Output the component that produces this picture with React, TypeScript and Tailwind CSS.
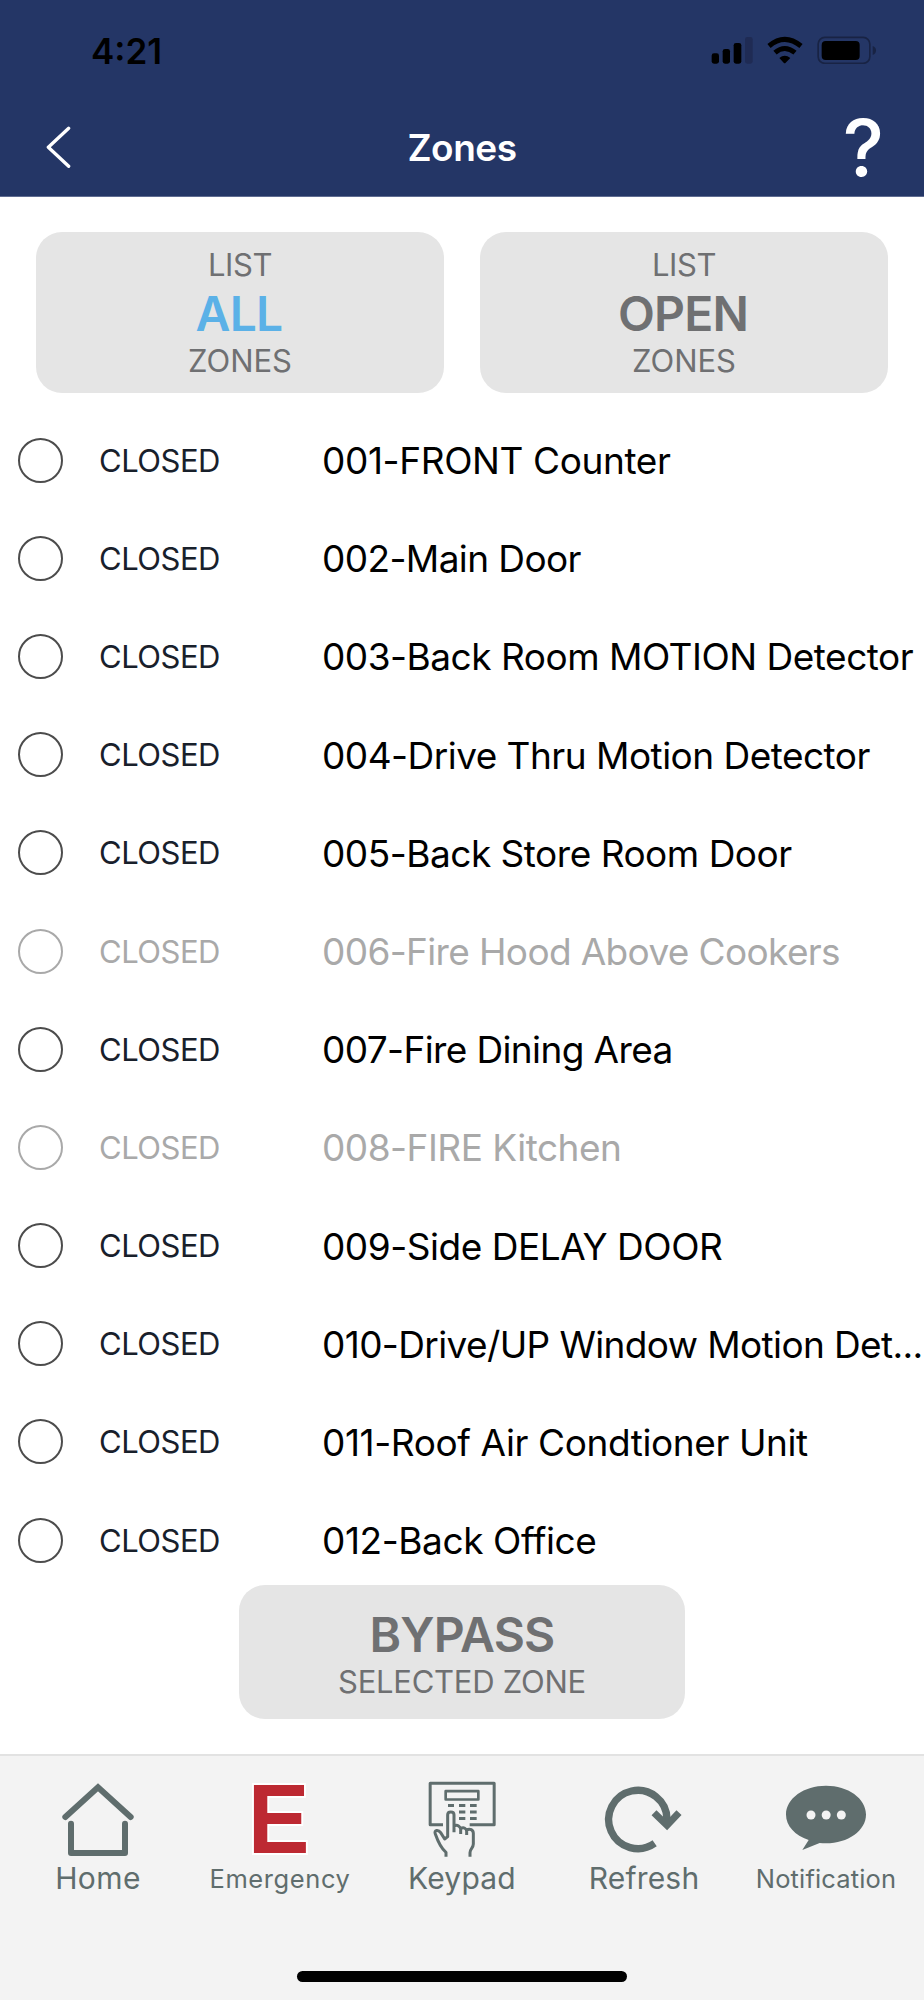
import React from 'react';

type Zone = { name: string; tracking: string; disabled?: boolean };

const zones: Zone[] = [
  { name: '001-FRONT Counter', tracking: 'tracking-[-0.38px]' },
  { name: '002-Main Door', tracking: 'tracking-[-0.6px]' },
  { name: '003-Back Room MOTION Detector', tracking: 'tracking-[-0.49px]' },
  { name: '004-Drive Thru Motion Detector', tracking: 'tracking-[-0.52px]' },
  { name: '005-Back Store Room Door', tracking: 'tracking-[-0.49px]' },
  { name: '006-Fire Hood Above Cookers', tracking: 'tracking-[-0.64px]', disabled: true },
  { name: '007-Fire Dining Area', tracking: 'tracking-[-0.62px]' },
  { name: '008-FIRE Kitchen', tracking: 'tracking-[-0.5px]', disabled: true },
  { name: '009-Side DELAY DOOR', tracking: 'tracking-[-0.47px]' },
  { name: '010-Drive/UP Window Motion Det...', tracking: 'tracking-[-0.62px]' },
  { name: '011-Roof Air Condtioner Unit', tracking: 'tracking-[-0.4px]' },
  { name: '012-Back Office', tracking: 'tracking-[-0.42px]' },
];

function StatusIcons() {
  return (
    <svg className="h-7 w-[168px]" viewBox="748 108 504 84" fill="none">
      <rect x="750" y="160" width="22" height="31" rx="7" fill="#000" />
      <rect x="783" y="147" width="22" height="44" rx="7" fill="#000" />
      <rect x="816" y="129" width="23" height="62" rx="7" fill="#000" />
      <rect x="850" y="111" width="23" height="80" rx="7" fill="#1f2b54" />
      <path d="M922 138Q969 98 1018 138" stroke="#000" strokeWidth="15" />
      <path d="M940 158Q969 133 1000 158" stroke="#000" strokeWidth="15" />
      <path d="M953 174Q969 160 986 174L972 188Q969 191 966 188Z" fill="#000" />
      <rect x="1069.500" y="112" width="155" height="78" rx="20" stroke="#182344" strokeWidth="5" />
      <rect x="1080" y="123" width="114" height="57" rx="12" fill="#000" />
      <path d="M1233 138Q1243 142 1243 151.500Q1243 161 1233 165Z" fill="#182344" />
    </svg>
  );
}

function HomeIcon() {
  return (
    <svg className="h-[106px] w-[182px]" viewBox="21 48 546 318" fill="none" stroke="#5f6d6d" strokeWidth="18" strokeLinecap="round" strokeLinejoin="round">
      <path d="M196 231L294 142L392 231" strokeLinejoin="miter" strokeMiterlimit="1.8" />
      <path d="M213 251V339H375V251" />
    </svg>
  );
}

function EmergencyIcon() {
  return (
    <svg className="h-[106px] w-[182px] overflow-visible" viewBox="567 48 546 318">
      <text
        transform="translate(743.500 340) scale(0.935 1)"
        className="font-['Liberation_Sans',sans-serif] text-[297px] font-bold"
        fill="#bd2932"
        stroke="#fff"
        strokeWidth="12"
        paintOrder="stroke"
      >
        E
      </text>
    </svg>
  );
}

function KeypadIcon() {
  return (
    <svg className="h-[106px] w-[182px]" viewBox="3 48 546 318" fill="none" stroke="#5f6d6d" strokeWidth="9">
      <path d="M219 254.500H180.500V129.500H372.500V254.500H299" strokeLinejoin="round" />
      <rect x="227" y="153.500" width="98" height="25" strokeWidth="8" strokeLinejoin="round" />
      <path d="M234 196.500H252M267 196.500H286M300 196.500H320M267 216H286M300 216H320M267 235.500H286M300 235.500H320" />
      <path
        d="M228 350V337C212 324 205 308 196 282C191 270 205 268 212 278L224 297L233 290V224C233 213 252 213 252 224V277M252 258C262 252 272 260 272 268V282M272 266C281 260 290 266 290 274V285M290 270C300 264 310 270 310 280V312C310 324 300 326 300 338V350"
        strokeLinejoin="round"
      />
    </svg>
  );
}

function RefreshIcon() {
  return (
    <svg className="h-[106px] w-[182px]" viewBox="549 48 546 318" fill="none" stroke="#5f6d6d">
      <path d="M854 310A87.500 87.500 0 1 1 891 237V249" strokeWidth="22" />
      <path d="M852 218L891 256L927 218" strokeWidth="21" />
    </svg>
  );
}

function NotificationIcon() {
  return (
    <svg className="h-[106px] w-[182px]" viewBox="165 48 546 318">
      <path
        d="M438 137C504 137 558 175 558 223.500C558 272 504 310 438 310Q428 310 419 309L367 330L386 300C345 286 318 258 318 223.500C318 175 372 137 438 137Z"
        fill="#5f6d6d"
      />
      <circle cx="393" cy="225" r="13.500" fill="#f3f3f3" />
      <circle cx="438.500" cy="225" r="13.500" fill="#f3f3f3" />
      <circle cx="484" cy="225" r="13.500" fill="#f3f3f3" />
    </svg>
  );
}

const tabs = [
  { label: 'Home', Icon: HomeIcon, text: 'text-[30px] tracking-[0.4px]' },
  { label: 'Emergency', Icon: EmergencyIcon, text: 'pt-px text-[25.5px] tracking-[0.6px]' },
  { label: 'Keypad', Icon: KeypadIcon, text: 'text-[30px] tracking-[0.2px]' },
  { label: 'Refresh', Icon: RefreshIcon, text: 'text-[30px] tracking-[0.2px]' },
  { label: 'Notification', Icon: NotificationIcon, text: 'pt-px text-[25.5px] tracking-[0.15px]' },
];

function ListButton({ word, color }: { word: string; color: string }) {
  return (
    <button className="flex h-[161px] w-[408px] flex-col items-center rounded-[26px] bg-[#e5e5e5] pt-[15px] text-[#6f7072]">
      <span className="text-[31px] leading-[36px] tracking-[-0.4px]">LIST</span>
      <span className={`pt-px pr-[2px] text-[48px] leading-[59px] font-semibold tracking-[-0.8px] ${color}`}>{word}</span>
      <span className="text-[31px] leading-[36px] tracking-[-0.05px]">ZONES</span>
    </button>
  );
}

export default function App() {
  return (
    <div className="flex h-[2000px] w-[924px] flex-col overflow-hidden bg-white font-['Inter',sans-serif]">
      <header className="flex h-[197px] shrink-0 flex-col border-b border-[#5f6c91] bg-[#243666]">
        <div className="flex h-[100px] items-center justify-between pr-[45px] pl-[91px]">
          <span className="pt-[2px] text-[35px] leading-[40px] font-semibold">4:21</span>
          <StatusIcons />
        </div>
        <div className="grid h-[94px] grid-cols-[200px_1fr_200px] items-center text-white">
          <svg className="ml-[46px] h-[42px] w-[25px]" viewBox="138 378 75 126" fill="none" stroke="#fff" strokeWidth="10" strokeLinecap="round" strokeLinejoin="round">
            <path d="M206 385L145 442L206 499" />
          </svg>
          <h1 className="pt-px text-center text-[37px] leading-[44px] font-semibold tracking-[-0.5px]">Zones</h1>
          <span className="pt-[2px] pr-[40px] text-right text-[78px] leading-[90px] font-medium">?</span>
        </div>
      </header>

      <main className="flex h-[1557px] shrink-0 flex-col">
        <div className="flex gap-9 px-9 pt-[35px]">
          <ListButton word="ALL" color="text-[#5bb1e7]" />
          <ListButton word="OPEN" color="text-[#6f7072]" />
        </div>
        <ul className="mt-[18px]">
          {zones.map((z) => (
            <li key={z.name} className="flex h-[98.2px] items-center pl-[18px] whitespace-nowrap">
              <span className={`size-[45px] shrink-0 rounded-full border-2 ${z.disabled ? 'border-[#a9a9a9]' : 'border-[#4c4c4c]'}`} />
              <span
                className={`ml-[36px] w-[223px] shrink-0 pt-px text-[31px] leading-[40px] tracking-[-0.5px] ${z.disabled ? 'text-[#a9a9a9]' : 'text-[#18202b]'}`}
              >
                CLOSED
              </span>
              <span className={`shrink-0 pt-[2px] text-[37px] leading-[44px] ${z.disabled ? 'text-[#a9a9a9]' : 'text-black'} ${z.tracking}`}>{z.name}</span>
            </li>
          ))}
        </ul>
        <button className="-mt-[4px] ml-[239px] flex h-[134px] w-[446px] shrink-0 flex-col items-center rounded-[26px] bg-[#e5e5e5] pt-[20px] text-[#6f7072]">
          <span className="text-[48px] leading-[60px] font-semibold tracking-[-0.8px]">BYPASS</span>
          <span className="-mt-px text-[31px] leading-[36px] tracking-[-0.25px]">SELECTED ZONE</span>
        </button>
      </main>

      <footer className="flex h-[246px] shrink-0 flex-col border-t-2 border-[#e2e2e2] bg-[#f3f3f3]">
        <nav className="flex px-[7px]">
          {tabs.map(({ label, Icon, text }) => (
            <div key={label} className="flex w-[182px] flex-col items-center text-[#5f6d6d]">
              <Icon />
              <span className={`flex h-[32px] items-baseline leading-[32px] ${text}`}>{label}</span>
            </div>
          ))}
        </nav>
        <div className="mt-[77px] ml-[297px] h-[11px] w-[330px] rounded-full bg-black" />
      </footer>
    </div>
  );
}
